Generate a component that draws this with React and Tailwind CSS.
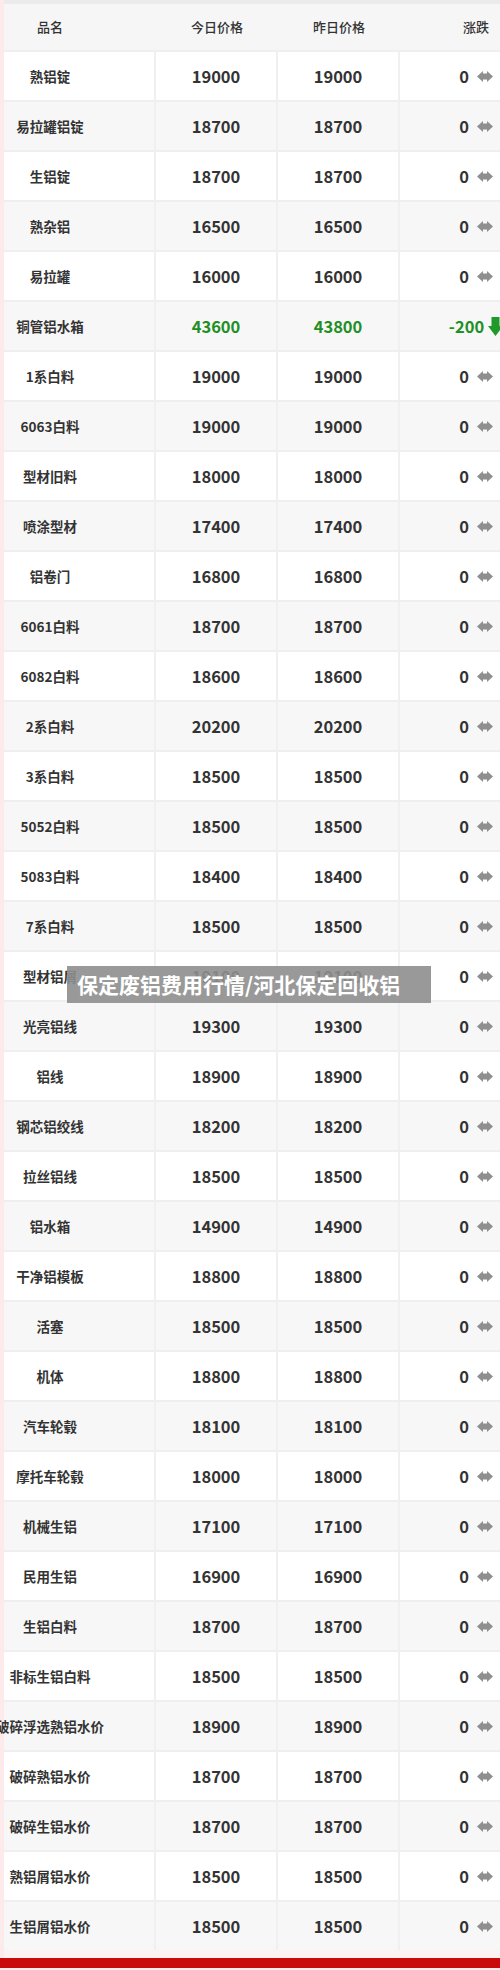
import React from "react";

const rows = [
  ["熟铝锭", "19000", "19000", "0"],
  ["易拉罐铝锭", "18700", "18700", "0"],
  ["生铝锭", "18700", "18700", "0"],
  ["熟杂铝", "16500", "16500", "0"],
  ["易拉罐", "16000", "16000", "0"],
  ["铜管铝水箱", "43600", "43800", "-200"],
  ["1系白料", "19000", "19000", "0"],
  ["6063白料", "19000", "19000", "0"],
  ["型材旧料", "18000", "18000", "0"],
  ["喷涂型材", "17400", "17400", "0"],
  ["铝卷门", "16800", "16800", "0"],
  ["6061白料", "18700", "18700", "0"],
  ["6082白料", "18600", "18600", "0"],
  ["2系白料", "20200", "20200", "0"],
  ["3系白料", "18500", "18500", "0"],
  ["5052白料", "18500", "18500", "0"],
  ["5083白料", "18400", "18400", "0"],
  ["7系白料", "18500", "18500", "0"],
  ["型材铝屑", "19100", "19100", "0"],
  ["光亮铝线", "19300", "19300", "0"],
  ["铝线", "18900", "18900", "0"],
  ["钢芯铝绞线", "18200", "18200", "0"],
  ["拉丝铝线", "18500", "18500", "0"],
  ["铝水箱", "14900", "14900", "0"],
  ["干净铝模板", "18800", "18800", "0"],
  ["活塞", "18500", "18500", "0"],
  ["机体", "18800", "18800", "0"],
  ["汽车轮毂", "18100", "18100", "0"],
  ["摩托车轮毂", "18000", "18000", "0"],
  ["机械生铝", "17100", "17100", "0"],
  ["民用生铝", "16900", "16900", "0"],
  ["生铝白料", "18700", "18700", "0"],
  ["非标生铝白料", "18500", "18500", "0"],
  ["破碎浮选熟铝水价", "18900", "18900", "0"],
  ["破碎熟铝水价", "18700", "18700", "0"],
  ["破碎生铝水价", "18700", "18700", "0"],
  ["熟铝屑铝水价", "18500", "18500", "0"],
  ["生铝屑铝水价", "18500", "18500", "0"],
];

const font = { fontFamily: '"Noto Sans CJK SC", "Noto Sans", sans-serif' };

function FlatArrow() {
  return (
    <svg width="16" height="11" viewBox="0 0 16 11" className="shrink-0">
      <path d="M0 5.5 L6 0 L6 2.5 L10 2.5 L10 0 L16 5.5 L10 11 L10 8.5 L6 8.5 L6 11 Z" fill="#8f8f8f" />
    </svg>
  );
}

function DownArrow() {
  return (
    <svg width="15" height="19" viewBox="0 0 15 19" className="shrink-0">
      <path d="M3.5 0 H11.5 V9 H15 L7.5 19 L0 9 H3.5 Z" fill="#1f9a2a" />
    </svg>
  );
}

export default function App() {
  return (
    <div className="relative w-[500px] h-[1970px] overflow-hidden bg-[#fdeaea]" style={font}>
      <div className="ml-[4px] w-[548px] border-t-4 border-[#ebebeb]">
        {/* header */}
        <div className="flex h-[46px] bg-[#f6f6f6] text-[13px] font-medium text-[#333] items-center">
          <div className="w-[152px] h-full flex items-center">
            <div className="w-[92px] flex justify-center whitespace-nowrap">品名</div>
          </div>
          <div className="w-[122px] flex justify-center">今日价格</div>
          <div className="w-[122px] flex justify-center">昨日价格</div>
          <div className="w-[152px] flex justify-center">涨跌</div>
        </div>
        {rows.map((r, i) => {
          const down = r[3] !== "0";
          const numColor = down ? "text-[#1f8f26]" : "text-[#333]";
          const bg = i % 2 === 0 ? "bg-white" : "bg-[#f7f7f7]";
          return (
            <div key={i} className={`flex h-[50px] border-t-2 border-[#efefef] ${bg}`}>
              <div className="w-[152px] flex items-center border-r-2 border-[#f0f0f0]">
                <div className="w-[92px] flex justify-center whitespace-nowrap text-[13.5px] font-bold text-[#333]">
                  {r[0]}
                </div>
              </div>
              <div className={`w-[122px] flex items-center justify-center border-r-2 border-[#f0f0f0] text-[16.5px] font-bold ${numColor}`}>
                {r[1]}
              </div>
              <div className={`w-[122px] flex items-center justify-center border-r-2 border-[#f0f0f0] text-[16.5px] font-bold ${numColor}`}>
                {r[2]}
              </div>
              <div className="w-[152px] flex items-center justify-center">
                <div className={`flex items-center ${down ? "gap-[4px]" : "gap-[8px]"} text-[16.5px] font-bold ${numColor}`}>
                  <span>{r[3]}</span>
                  {down ? <DownArrow /> : <FlatArrow />}
                </div>
              </div>
            </div>
          );
        })}
      </div>
      <div className="ml-[4px] h-[8px] bg-[#fdf2f2]" />
      <div className="h-[10px] bg-[#c80a0a]" />

      <div className="absolute left-[67px] top-[966px] w-[364px] h-[37px] bg-[#8e8e8e]/90 flex items-center pl-[10px]">
        <span className="text-white text-[21px] font-bold whitespace-nowrap leading-none">保定废铝费用行情/河北保定回收铝</span>
      </div>
    </div>
  );
}
